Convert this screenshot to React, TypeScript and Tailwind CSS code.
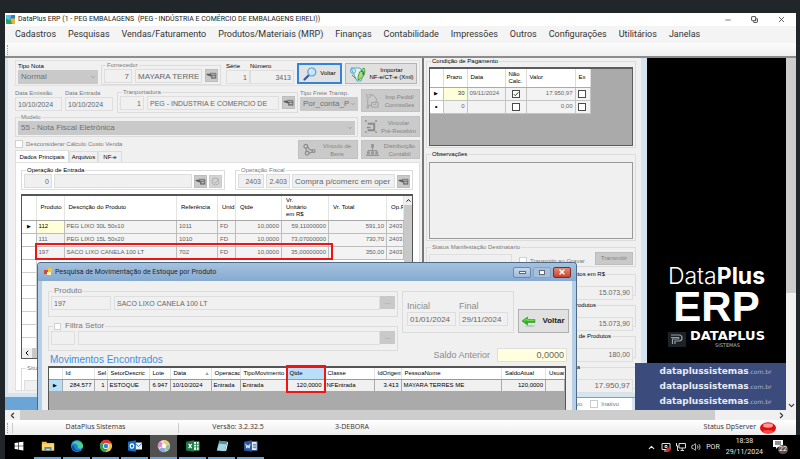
import React, { useId } from 'react';
import { ChevronDown, ChevronLeft, ChevronRight, ChevronUp, Minus, X, Copy, Volume2 } from 'lucide-react';

const cx = (...parts: (string | false | undefined)[]) => parts.filter(Boolean).join(' ');

/* ---------- form primitives ---------- */

function Box({ value = '', label, className }: { value?: string; label: string; className?: string }) {
  return (
    <input
      aria-label={label}
      defaultValue={value}
      readOnly
      className={cx(
        'h-[14px] min-w-0 border border-[#dedede] bg-[#f0f0f0] px-[2px] text-[7px] text-[#666] outline-none',
        className,
      )}
    />
  );
}

function Field({ label, dark, className, children }: { label: string; dark?: boolean; className?: string; children: React.ReactNode }) {
  return (
    <label className={cx('flex flex-col', className)}>
      <span className={cx('h-2 text-[6px] leading-[8px] whitespace-nowrap', dark ? 'text-black' : 'text-[#7a7a7a]')}>{label}</span>
      {children}
    </label>
  );
}

function Group({ title, dark, className, legendClass, children }: { title: React.ReactNode; dark?: boolean; className?: string; legendClass?: string; children?: React.ReactNode }) {
  return (
    <fieldset className={cx('min-w-0 border border-[#dcdcdc] px-[2px] pb-px', className)}>
      <legend className={cx('ml-[2px] px-px leading-[8px] whitespace-nowrap', dark ? 'text-black' : 'text-[#7a7a7a]', legendClass ?? 'text-[6px]')}>{title}</legend>
      {children}
    </fieldset>
  );
}

function Drop({ value, label, className }: { value: string; label: string; className?: string }) {
  return (
    <span className={cx('relative flex h-[14px]', className)}>
      <select aria-label={label} className="h-full w-full min-w-0 appearance-none bg-[#c9c9c9] pl-[3px] text-[8px] text-[#707070] outline-none">
        <option>{value}</option>
      </select>
      <ChevronDown className="pointer-events-none absolute top-[4px] right-[2px] size-[6px] text-[#808080]" />
    </span>
  );
}

function Tick({ label, checked }: { label: string; checked?: boolean }) {
  return (
    <span className="relative inline-flex size-2 align-middle">
      <input
        type="checkbox"
        aria-label={label}
        defaultChecked={checked}
        className="size-2 appearance-none border border-[#4a4a4a] bg-white"
      />
      {checked && (
        <svg viewBox="0 0 8 8" className="pointer-events-none absolute inset-0 size-2" fill="none" stroke="#333">
          <path d="M1.8 4.2 3.3 5.7 6.4 2.3" />
        </svg>
      )}
    </span>
  );
}

function FindButton() {
  return (
    <button aria-label="Localizar" className="flex h-[13px] w-[13px] shrink-0 items-center justify-center border border-[#bdbdbd] bg-[#c9c9c9]">
      <svg viewBox="0 0 12 8" className="h-[7px] w-[11px]" fill="none" stroke="#6a6a6a">
        <path d="M.5 2h4l1.500 1.500L5 5 .5 3.500z" fill="#5c5c5c" stroke="none" />
        <path d="M4 1.500h7v2" />
        <rect x="6" y="3.500" width="5" height="3.500" fill="#8a8a8a" />
        <path d="M7.500 5.200h2" stroke="#ddd" />
      </svg>
    </button>
  );
}

function ActionButton({ lines, icon, className }: { lines: string[]; icon: React.ReactNode; className?: string }) {
  return (
    <button className={cx('flex items-center justify-center gap-px border border-[#c2c2c2] bg-[#cacaca] pr-[3px] text-[6px] leading-[8px] text-[#848484]', className)}>
      <span className="flex w-5 justify-center">{icon}</span>
      <span className="flex-1 whitespace-nowrap">
        {lines.map((l) => (
          <span key={l} className="block">{l}</span>
        ))}
      </span>
    </button>
  );
}

/* ---------- drawings ---------- */

const PedidoIcon = () => (
  <svg viewBox="0 0 18 18" className="size-[17px]" fill="none" stroke="#a0a0a0">
    <path d="M3 8 9 2.500 14 8M4 8v6h4M13 8v3M8 11h7v5H8zM3 2v4M5 3h3M10 13h3" />
    <circle cx="4" cy="16" r="1.200" />
  </svg>
);
const VincularIcon = () => (
  <svg viewBox="0 0 14 14" className="size-[13px]" fill="none" stroke="#8b8b8b" strokeWidth="2">
    <path d="M4 4h7v7H4" />
    <path d="M1 1h2M1 13h2M12 1h2M12 13h2M3 8h4" strokeWidth="1.500" />
  </svg>
);
const VinculoIcon = () => (
  <svg viewBox="0 0 14 14" className="size-[13px]" fill="none" stroke="#8b8b8b" strokeWidth="1.300">
    <circle cx="3" cy="3.500" r="2" />
    <circle cx="4.500" cy="11" r="2" />
    <circle cx="11.500" cy="8.500" r="1.500" />
    <path d="M3 5.500l1 3.500M6.500 11l4-1.500M5 4l2 3 3 1" />
  </svg>
);
const DistribuicaoIcon = () => (
  <svg viewBox="0 0 14 14" className="size-[13px]" fill="#959595">
    <path d="M5.500 1h3v4h-3zM6.500 5h1v3h-1zM2 7.500h10v1H2zM1 9h3v3H1zM5.500 9h3v3h-3zM10 9h3v3h-3z" />
    <path d="M0 12.500h14V14H0z" />
  </svg>
);
const MagnifierIcon = () => (
  <svg viewBox="0 0 14 14" className="size-[14px]">
    <path d="M1.500 12.500 6 8" stroke="#345a9a" strokeWidth="2.200" strokeLinecap="round" />
    <circle cx="8.800" cy="5" r="4" fill="#bfe6fb" stroke="#5b9fd6" strokeWidth="1.200" />
    <path d="M6.500 4.500a2.500 2.500 0 0 1 2-2" stroke="#fff" fill="none" />
  </svg>
);
const ImportIcon = () => (
  <svg viewBox="0 0 18 18" className="size-[18px]" fill="none">
    <path d="M2 3h9l4 5-3 8H8z" fill="#dff3f7" stroke="#58a9b8" />
    <path d="M9 15c0-5 1-9 6-12 2 4 0 9-4 11z" fill="#a6e25c" stroke="#4d9a3a" />
    <path d="M12 6c2 0 3 2 2 4" stroke="#1b74c9" strokeWidth="1.500" />
    <circle cx="4" cy="6" r="2.500" stroke="#52b3d9" />
    <path d="M3 10l4 4" stroke="#5a8a9a" />
  </svg>
);
const GreenArrow = () => (
  <svg viewBox="0 0 14 11" className="h-[11px] w-[14px]">
    <ellipse cx="8" cy="10" rx="5" ry="1" fill="#b9c9b9" />
    <path d="M0 5 5.500 1v2.500H13v3H5.500V9z" fill="#2db51d" stroke="#1c8a12" strokeWidth=".5" />
    <path d="M2 5 5 3v1.300h7.500" stroke="#8bea70" strokeWidth=".8" fill="none" />
  </svg>
);

/* ---------- title and menu ---------- */

const menus = ['Cadastros', 'Pesquisas', 'Vendas/Faturamento', 'Produtos/Materiais (MRP)', 'Finanças', 'Contabilidade', 'Impressões', 'Outros', 'Configurações', 'Utilitários', 'Janelas'];

function TopBars() {
  return (
    <header className="font-['Roboto','Noto_Sans',sans-serif]">
      <div className="flex h-[13px] items-center bg-white pr-[10px] pl-px">
        <svg viewBox="0 0 10 10" className="size-[9px]">
          <rect width="10" height="10" fill="#2b7fc4" />
          <path d="M0 0h6L4 6 0 4z" fill="#4cc3e8" />
          <path d="M5 4h5v6H4z" fill="#f0b33a" />
          <path d="M0 6l5-1 2 5H0z" fill="#2fa35b" />
        </svg>
        <h1 className="ml-[3px] text-[7px] leading-[13px] whitespace-pre text-[#222]">{'DataPlus ERP (1 - PEG EMBALAGENS  (PEG - INDÚSTRIA E COMÉRCIO DE EMBALAGENS EIRELI))'}</h1>
        <div className="ml-auto flex items-center gap-[19px] text-[#333]">
          <button aria-label="Minimizar"><Minus className="size-[8px]" /></button>
          <button aria-label="Restaurar"><Copy className="size-[7px] -scale-x-100 rotate-90" strokeWidth={3} /></button>
          <button aria-label="Fechar"><X className="size-[9px]" /></button>
        </div>
      </div>
      <nav className="flex h-[17px] items-center gap-[12px] bg-[#f4f4f4] pl-[10px] text-[9px] text-[#333]">
        {menus.map((m) => (
          <button key={m} className="whitespace-nowrap">{m}</button>
        ))}
      </nav>
      <div className="flex h-[15px] items-center border-b-2 border-[#8c8c8c] bg-linear-to-b from-[#fcfcfc] to-[#f0f0f0] pl-[2px]">
        <span className="h-[10px] border-l border-dotted border-[#999]" />
      </div>
    </header>
  );
}

/* ---------- products grid ---------- */

const products = [
  ['112', 'PEG LIXO 30L 50x10', '1011', 'FD', '10,0000', '59,11000000', '591,10', '2403'],
  ['111', 'PEG LIXO 15L 50x20', '1010', 'FD', '10,0000', '73,07000000', '730,70', '2403'],
  ['197', 'SACO LIXO CANELA 100 LT', '702', 'FD', '10,0000', '35,00000000', '350,00', '2403'],
];
const blankRows = [0, 1, 2, 3, 4, 5, 6];

function ProductsGrid() {
  const head = ['Produto', 'Descrição do Produto', 'Referência', 'Unid', 'Qtde'];
  return (
    <div className="relative mt-[4px] mr-[6px] flex h-[165px] flex-col border border-t-2 border-[#555] bg-white">
      <div className="flex min-h-0 flex-1">
        <div className="min-w-0 flex-1 overflow-hidden">
          <table className="w-full table-fixed border-collapse text-[6px] leading-[7px] whitespace-nowrap">
            <colgroup>
              <col className="w-[14px]" />
              <col className="w-[28px]" />
              <col />
              <col className="w-[41px]" />
              <col className="w-[18px]" />
              <col className="w-[46px]" />
              <col className="w-[47px]" />
              <col className="w-[58px]" />
              <col className="w-[17px]" />
            </colgroup>
            <thead>
              <tr className="h-[24px] text-left text-black [&>th]:overflow-hidden [&>th]:border-r [&>th]:border-b [&>th]:border-r-[#e4e4e4] [&>th]:border-b-[#a8a8a8] [&>th]:px-[4px] [&>th]:font-normal">
                <th />
                {head.map((h) => (
                  <th key={h}>{h}</th>
                ))}
                <th>Vr.<br />Unitário<br />em R$</th>
                <th>Vr. Total</th>
                <th>Op.F</th>
              </tr>
            </thead>
            <tbody className="text-[#606060]">
              {products.map((p, r) => (
                <tr key={p[0]} className="h-[13px] bg-[#f3f3f3] [&>td]:border-r [&>td]:border-b [&>td]:border-[#bdbdbd] [&>td]:px-[2px]">
                  <td className="bg-white text-center text-[5px] text-black">{r === 0 ? '▶' : ''}</td>
                  {p.map((v, i) => (
                    <td key={i} className={cx('overflow-hidden', i >= 4 && i < 7 && 'text-right', i === 0 && r === 0 && 'bg-[#ffffd8] text-black')}>{v}</td>
                  ))}
                </tr>
              ))}
              {blankRows.map((b) => (
                <tr key={b} className="h-[13px]">
                  <td className="border-r border-b border-[#cfcfcf]" />
                  <td className="border-b border-[#cfcfcf]" colSpan={8} />
                </tr>
              ))}
            </tbody>
          </table>
        </div>
        <div className="flex w-[8px] flex-col items-center bg-[#f0f0f0]">
          <ChevronUp className="my-px size-[7px] text-black" strokeWidth={3} />
          <div className="w-full flex-1 bg-[#c8c8c8]" />
        </div>
      </div>
      <div className="flex h-[10px] items-center bg-[#f0f0f0]">
        <ChevronLeft className="mx-px size-[8px] text-black" strokeWidth={3} />
        <div className="h-full flex-1 bg-[#c8c8c8]" />
      </div>
      <div className="absolute top-[47px] right-[79px] left-[13px] h-[17px] border-2 border-[#f01414]" />
    </div>
  );
}

/* ---------- invoice form, left side ---------- */

function InvoiceLeft() {
  return (
    <section className="flex min-w-0 flex-1 flex-col pt-[2px] pr-[2px] pl-[7px]">
      <div className="flex h-[26px] border border-[#e2e2e2] px-[2px]">
        <Field label="Tipo Nota" dark className="mr-[3px] w-[80px] pt-px"><Drop label="Tipo Nota" value="Normal" /></Field>
        <Group title="Fornecedor" className="mr-[5px] h-[24px] flex-1">
          <div className="flex gap-[3px]">
            <Box label="Código do fornecedor" value="7" className="w-[28px] text-right text-[8px]" />
            <Box label="Nome do fornecedor" value="MAYARA TERRE" className="flex-1 text-[8px]" />
            <FindButton />
          </div>
        </Group>
        <Field label="Série" dark className="w-[24px] pt-px"><Box label="Série" value="1" className="w-full text-right" /></Field>
        <Field label="Número" dark className="mr-[3px] w-[44px] pt-px"><Box label="Número" value="3413" className="w-full text-right" /></Field>
        <button className="mt-[2px] mr-[3px] flex h-[21px] w-[45px] items-center justify-center gap-[3px] border-2 border-[#2f86d8] bg-[#e2e2e2] text-[6px] text-black"><MagnifierIcon />Voltar</button>
        <button className="mt-[2px] flex h-[21px] w-[72px] items-center justify-center gap-[3px] border border-[#b4b4b4] bg-[#e0e0e0] text-[6px] leading-[7px] text-black"><ImportIcon /><span className="whitespace-nowrap">Importar<br />NF-e/CT-e (Xml)</span></button>
      </div>
      <div className="mt-[2px] flex h-[25px]">
        <Field label="Data Emissão" className="mr-[3px] w-[47px] pt-px"><Box label="Data Emissão" value="10/10/2024" className="w-full" /></Field>
        <Field label="Data Entrada" className="mr-[4px] w-[48px] pt-px"><Box label="Data Entrada" value="10/10/2024" className="w-full" /></Field>
        <Group title="Tranportadora" className="mr-[2px] flex-1">
          <div className="flex gap-[3px]">
            <Box label="Código da transportadora" value="1" className="w-[24px] text-right" />
            <Box label="Nome da transportadora" value="PEG - INDUSTRIA E COMERCIO DE" className="flex-1" />
            <FindButton />
          </div>
        </Group>
        <Field label="Tipo Frete Transp." className="mr-[3px] w-[58px] pt-px"><Drop label="Tipo Frete" value="Por_conta_P" /></Field>
        <ActionButton lines={['Imp.Pedid/', 'Comissões']} icon={<PedidoIcon />} className="mt-px h-[23px] w-[59px]" />
      </div>
      <div className="flex h-[24px]">
        <Group title="Modelo" className="mr-[3px] flex-1"><Drop label="Modelo" value="55 - Nota Fiscal Eletrônica" /></Group>
        <ActionButton lines={['Vincular', 'Pré-Recebim']} icon={<VincularIcon />} className="mt-[3px] h-[21px] w-[59px]" />
      </div>
      <div className="flex h-[25px] gap-[3px] pt-[3px]">
        <div className="flex flex-1 flex-col justify-between">
          <label className="flex items-center gap-[3px] text-[6px] leading-[8px] text-[#7a7a7a]">
            <input type="checkbox" className="size-2 appearance-none border border-[#d0d0d0] bg-white" />
            Desconsiderar Cálculo Custo Venda
          </label>
          <div className="flex items-end text-[6px] leading-[10px] text-black">
            <button className="h-[12px] w-[54px] border border-b-0 border-[#ddd] bg-white">Dados Principais</button>
            <button className="h-[11px] w-[29px] border border-b-0 border-[#ddd]">Arquivos</button>
            <button className="h-[11px] w-[24px] border border-b-0 border-[#ddd]">NF-e</button>
          </div>
        </div>
        <ActionButton lines={['Vínculo de', 'Bens']} icon={<VinculoIcon />} className="h-[19px] w-[60px]" />
        <ActionButton lines={['Distribuição', 'Contábil']} icon={<DistribuicaoIcon />} className="h-[19px] w-[59px]" />
      </div>
      <div className="mb-[2px] min-h-0 flex-1 overflow-hidden border border-[#e0e0e0] bg-white pt-[3px] pl-[5px]">
        <div className="mr-[6px] flex justify-between">
          <Group title="Operação de Entrada" dark className="w-[204px]">
            <div className="flex items-center gap-[2px]">
              <Box label="Código da operação" value="0" className="w-[28px] text-right" />
              <Box label="Operação de Entrada" className="flex-1" />
              <FindButton />
              <button aria-label="Confirmar" className="flex h-[13px] w-[13px] items-center justify-center border border-[#ccc] bg-[#d4d4d4]">
                <svg viewBox="0 0 10 10" className="size-[9px]" fill="none" stroke="#aaa"><circle cx="5" cy="5" r="4" /><path d="M3 5l2 2 3-4" /></svg>
              </button>
            </div>
          </Group>
          <Group title="Operação Fiscal" className="w-[178px]">
            <div className="flex items-center gap-[2px]">
              <Box label="CFOP" value="2403" className="w-[26px] text-right" />
              <Box label="CFOP formatado" value="2.403" className="w-[24px] text-right" />
              <Box label="Operação Fiscal" value="Compra p/comerc em oper" className="flex-1 text-[8px]" />
              <FindButton />
            </div>
          </Group>
        </div>
        <ProductsGrid />
        <Group title="Situação" className="mt-[5px] mr-[6px]"><Box label="Situação" className="w-[80px]" /></Group>
      </div>
    </section>
  );
}

/* ---------- invoice form, right side ---------- */

function Total({ title, value, legend, bold }: { title: string; value: string; legend: string; bold?: boolean }) {
  return (
    <Group title={<span className={cx('block text-right', legend)}>{title}</span>} dark className="h-[26px] w-[110px] self-end">
      <Box label={title} value={value} className={cx('w-full text-right', bold && 'text-[8px]')} />
    </Group>
  );
}

function PaymentGrid() {
  return (
    <div className="h-[79px] border border-t-2 border-[#5c5c5c] bg-[#aaa]">
      <table className="w-[160px] table-fixed border-collapse text-[6px] leading-[7px]">
        <colgroup>
          <col className="w-[13px]" />
          <col className="w-[24px]" />
          <col className="w-[38px]" />
          <col className="w-[21px]" />
          <col className="w-[49px]" />
          <col className="w-[15px]" />
        </colgroup>
        <thead>
          <tr className="h-[18px] bg-white text-left text-black [&>th]:border-r [&>th]:border-b [&>th]:border-r-[#ddd] [&>th]:border-b-[#aaa] [&>th]:px-[3px] [&>th]:font-normal">
            <th /><th>Prazo</th><th>Data</th><th>Não Calc.</th><th>Valor</th><th>Ex</th>
          </tr>
        </thead>
        <tbody className="text-[#666] [&_td]:border-r [&_td]:border-b [&_td]:border-[#c4c4c4] [&_td]:px-[2px]">
          <tr className="h-[13px] bg-[#f3f3f3]">
            <td className="bg-white text-center text-[5px] text-black">▶</td>
            <td className="bg-[#ffffd8] text-right text-[#333]">30</td>
            <td>09/11/2024</td>
            <td className="text-center"><Tick label="Não calcular parcela 1" checked /></td>
            <td className="text-right">17.950,97</td>
            <td><Tick label="Excluir parcela 1" /></td>
          </tr>
          <tr className="h-[13px] bg-[#f3f3f3]">
            <td className="bg-white text-center text-[8px] text-black">•</td>
            <td className="text-right">0</td>
            <td />
            <td className="text-center"><Tick label="Não calcular parcela 2" /></td>
            <td className="text-right">0,00</td>
            <td><Tick label="Excluir parcela 2" /></td>
          </tr>
        </tbody>
      </table>
    </div>
  );
}

function InvoiceRight() {
  const id = useId();
  return (
    <section className="flex w-[219px] shrink-0 flex-col overflow-hidden border-l-2 border-[#777] pr-[5px] pl-[2px]">
      <Group title="Condição de Pagamento" dark className="-mt-px pt-[2px]"><PaymentGrid /></Group>
      <Group title="Observações" dark className="mt-[2px] pt-[4px]">
        <textarea aria-label="Observações" readOnly className="block h-[77px] w-full resize-none border border-[#999] bg-[#f0f0f0] outline-none" />
      </Group>
      <Group title="Status Manifestação Destinatario" className="mt-[2px]">
        <div className="flex h-[14px] items-center gap-[7px]">
          <Box label="Status Manifestação" className="mt-[6px] w-[83px]" />
          <label htmlFor={id} className="mt-[6px] flex flex-1 items-center gap-[3px] text-[6px] leading-[8px] whitespace-nowrap text-[#7a7a7a]">
            <input id={id} type="checkbox" className="size-2 appearance-none border border-[#d0d0d0] bg-white" />
            Transmitir ao Gravar
          </label>
          <button className="h-[13px] w-[38px] shrink-0 border border-[#bdbdbd] bg-[#c9c9c9] text-[6px] leading-[9px] text-[#848484]">Transmitir</button>
        </div>
      </Group>
      <div className="mt-[3px] flex flex-col gap-[5px]">
        <Total title="Produtos em R$" value="15.073,90" legend="w-[73px]" />
        <Total title="Total Produtos" value="15.073,90" legend="w-[64px]" />
        <Total title="Total de Produtos" value="180,00" legend="w-[79px]" />
        <Total title="Nota" value="17.950,97" legend="w-[48px]" bold />
      </div>
    </section>
  );
}

/* ---------- stock movement window ---------- */

const movementCols: { head: string; value: string; width: string; right?: boolean }[] = [
  { head: 'Id', value: '284.577', width: 'w-[32px]', right: true },
  { head: 'Sel', value: '1', width: 'w-[13px]', right: true },
  { head: 'SetorDescric', value: 'ESTOQUE', width: 'w-[42px]' },
  { head: 'Lote', value: '6.947', width: 'w-[21px]', right: true },
  { head: 'Data', value: '10/10/2024', width: 'w-[41px]' },
  { head: 'Operacao', value: 'Entrada', width: 'w-[29px]' },
  { head: 'TipoMovimento', value: 'Entrada', width: 'w-[46px]' },
  { head: 'Qtde', value: '120,0000', width: 'w-[38px]', right: true },
  { head: 'Classe', value: 'NFEntrada', width: 'w-[50px]' },
  { head: 'IdOrigem', value: '3.413', width: 'w-[27px]', right: true },
  { head: 'PessoaNome', value: 'MAYARA TERRES ME', width: '' },
  { head: 'SaldoAtual', value: '120,0000', width: 'w-[44px]', right: true },
  { head: 'Usuario', value: '', width: 'w-[19px]' },
];

function MovementGrid() {
  return (
    <div className="relative mr-[6px] min-h-0 flex-1 border border-t-2 border-b-0 border-[#555] bg-[#aaa]">
      <table className="w-full table-fixed border-collapse text-[6px] leading-[8px] whitespace-nowrap">
        <colgroup>
          <col className="w-[13px]" />
          {movementCols.map((c) => <col key={c.head} className={c.width} />)}
        </colgroup>
        <thead>
          <tr className="h-[11px] bg-white text-left text-black [&>th]:overflow-hidden [&>th]:border-r [&>th]:border-b [&>th]:border-r-[#e4e4e4] [&>th]:border-b-[#999] [&>th]:pl-[3px] [&>th]:font-normal">
            <th />
            {movementCols.map((c) => (
              <th key={c.head} className={cx(c.head === 'Qtde' && 'bg-[#b9def7]')}>
                {c.head}
                {c.head === 'Data' && <span className="float-right mr-px text-[5px] text-[#999]">▲</span>}
              </th>
            ))}
          </tr>
        </thead>
        <tbody>
          <tr className="h-[12px] bg-[#f0f0f0] text-black [&>td]:overflow-hidden [&>td]:border-r [&>td]:border-b [&>td]:border-[#aaa] [&>td]:px-[2px]">
            <td className="bg-[#b9def7] text-center text-[5px]">▶</td>
            {movementCols.map((c) => (
              <td key={c.head} className={cx(c.right && 'text-right')}>{c.value}</td>
            ))}
          </tr>
        </tbody>
      </table>
      <div className="absolute -top-[3px] right-[239px] h-[28px] w-[40px] border-2 border-[#f01414]" />
    </div>
  );
}

function CaptionButton({ label, className, children }: { label: string; className: string; children: React.ReactNode }) {
  return (
    <button aria-label={label} className={cx('flex h-[11px] w-[18px] items-center justify-center rounded-[2px] border', className)}>{children}</button>
  );
}

function StockWindow() {
  return (
    <div className="absolute top-[204px] right-[209px] bottom-0 left-[32px] flex flex-col rounded-t-[4px] border border-b-0 border-[#4f6a86] bg-[#b4cfe8] px-[4px]">
      <div className="-mx-[4px] flex h-[18px] shrink-0 items-center rounded-t-[3px] bg-linear-to-b from-[#a5c2de] to-[#86aad0] pr-[5px] pl-[6px]">
        <svg viewBox="0 0 8 8" className="size-2"><path d="M0 2h4v4H0z" fill="#d9482b" /><path d="M4 0h4v4H4z" fill="#f3c63a" /><path d="M3 4h4v3H3z" fill="#fff1b0" /></svg>
        <h2 className="ml-[3px] flex-1 font-['Roboto','Noto_Sans',sans-serif] text-[7px] text-[#1c2733]">Pesquisa de Movimentação de Estoque por Produto</h2>
        <div className="flex gap-[2px]">
          <CaptionButton label="Minimizar" className="border-[#6d88a6] bg-linear-to-b from-[#c4d8ec] to-[#9dbbdb]"><span className="h-[3px] w-[7px] border border-[#666] bg-white" /></CaptionButton>
          <CaptionButton label="Maximizar" className="border-[#8aa4c0] bg-[#a4c0de]"><span className="h-[5px] w-[6px] border border-[#667] bg-white" /></CaptionButton>
          <CaptionButton label="Fechar" className="border-[#7a2f22] bg-linear-to-b from-[#e08a78] to-[#c8402a]"><X className="size-[8px] text-white" strokeWidth={4} /></CaptionButton>
        </div>
      </div>
      <div className="flex min-h-0 flex-1 flex-col bg-[#f0f0f0] pt-[6px] pl-[6px]">
        <div className="flex">
          <div className="flex-1">
            <Group title="Produto" legendClass="text-[8px]" className="h-[30px] pt-px">
              <div className="flex gap-[3px]">
                <Box label="Código do produto" value="197" className="w-[60px]" />
                <div className="flex min-w-0 flex-1">
                  <Box label="Descrição do produto" value="SACO LIXO CANELA 100 LT" className="flex-1" />
                  <button aria-label="Buscar produto" className="h-[13px] w-[15px] bg-[#c9c9c9] text-[7px] text-[#999]">...</button>
                </div>
              </div>
            </Group>
            <Group
              title={<label className="flex items-center gap-[4px]"><input type="checkbox" className="size-[7px] appearance-none border border-[#d0d0d0] bg-white" />Filtra Setor</label>}
              legendClass="text-[8px]"
              className="mt-[5px] h-[29px] pt-px"
            >
              <div className="flex gap-[3px]">
                <Box label="Código do setor" className="w-[24px]" />
                <div className="flex min-w-0 flex-1">
                  <Box label="Setor" className="flex-1" />
                  <button aria-label="Buscar setor" className="h-[13px] w-[15px] bg-[#c9c9c9] text-[7px] text-[#999]">...</button>
                </div>
              </div>
            </Group>
            <h3 className="mt-[3px] mb-px ml-[2px] text-[10px] leading-[11px] text-[#3f8fe0]">Movimentos Encontrados</h3>
          </div>
          <div className="ml-[4px] flex w-[170px] flex-col">
            <div className="flex">
              <div className="mt-[4px] flex h-[42px] w-[112px] gap-[3px] border border-[#dcdcdc] px-[4px] pt-[9px]">
                <label className="flex w-[49px] flex-col text-[9px] leading-[11px] text-[#8c8c8c]">Inicial<Box label="Inicial" value="01/01/2024" className="w-full text-[8px]" /></label>
                <label className="flex w-[49px] flex-col text-[9px] leading-[11px] text-[#8c8c8c]">Final<Box label="Final" value="29/11/2024" className="w-full text-[8px]" /></label>
              </div>
              <button className="mt-[22px] ml-[4px] flex h-[24px] w-[51px] items-center justify-center gap-[6px] border border-[#b0b0b0] bg-[#e1e1e1] text-[8px] font-bold text-[#222]"><GreenArrow />Voltar</button>
            </div>
            <label className="mt-[15px] flex items-center justify-end gap-[7px] pr-[5px] text-[9px] leading-[13px] text-[#8c8c8c]">
              Saldo Anterior
              <Box label="Saldo Anterior" value="0,0000" className="w-[70px] bg-[#ffffe0] text-right text-[9px]" />
            </label>
          </div>
        </div>
        <MovementGrid />
      </div>
    </div>
  );
}

/* ---------- brand panel ---------- */

function Brand() {
  return (
    <aside className="flex w-[139px] shrink-0 flex-col bg-black text-white">
      <div className="flex flex-1 flex-col items-center justify-end pb-[15px]">
        <p className="font-['Inter'] text-[23px] leading-[24px]"><span className="font-light">Data</span><span className="font-bold">Plus</span></p>
        <p className="text-[42px] leading-[38px] font-bold">ERP</p>
        <div className="mt-[4px] flex items-center gap-[4px]">
          <svg viewBox="0 0 18 15" className="h-[15px] w-[18px]">
            <rect width="18" height="15" fill="#1d2226" />
            <path d="M3 3h8a3 3 0 0 1 0 6H7v3M3 5.500h7.500a1 1 0 0 1 0 1.500H4.500v5" fill="none" stroke="#93a0aa" strokeWidth="1.200" />
          </svg>
          <div className="flex flex-col items-center font-['DejaVu_Sans']">
            <p className="text-[13px] leading-[12px] font-bold">DATAPLUS</p>
            <p className="text-[5px] leading-[6px] text-[#bbb]">SISTEMAS</p>
          </div>
        </div>
      </div>
      <div className="-ml-[12px] flex h-[47px] flex-col justify-center bg-[#3b4b7c] pl-[10px] text-center font-['DejaVu_Sans']">
        {[0, 1, 2].map((i) => (
          <p key={i} className="text-[9px] leading-[14px] font-bold text-[#e8ecf5]">dataplussistemas<span className="text-[6px] font-normal text-[#aab4d0]">.com.br</span></p>
        ))}
      </div>
    </aside>
  );
}

/* ---------- status bar and taskbar ---------- */

function StatusBar() {
  return (
    <footer className="flex h-[15px] items-center bg-linear-to-b from-white to-[#ececec] font-['Open_Sans','Noto_Sans',sans-serif] text-[7px] text-[#333]">
      <span className="ml-[2px] h-[10px] border-l border-dotted border-[#999]" />
      <span className="ml-[4px] h-[10px] border-l border-[#ccc]" />
      <span className="w-[165px] text-center">DataPlus Sistemas</span>
      <span className="h-[10px] border-l border-[#ccc]" />
      <span className="w-[118px] text-center">Versão: 3.2.32.5</span>
      <span className="w-[110px] text-center">3-DEBORA</span>
      <span className="mr-[4px] ml-auto">Status DpServer</span>
      <svg viewBox="0 0 16 12" className="mr-[20px] h-[12px] w-[16px]">
        <ellipse cx="8" cy="6" rx="8" ry="5.800" fill="#e00f14" />
        <ellipse cx="8" cy="3.500" rx="5" ry="2.200" fill="#ff9a94" />
        <ellipse cx="8" cy="9.500" rx="5" ry="1.500" fill="#ff4a46" />
      </svg>
    </footer>
  );
}

const taskIcons: { name: string; active?: boolean; open?: boolean; art: React.ReactNode }[] = [
  { name: 'Iniciar', art: <path d="M3 4.500l4-.6v3.700H3zM7.700 3.800 13 3v4.600H7.700zM3 8.400h4v3.700l-4-.6zM7.700 8.400H13V13l-5.300-.8z" fill="#fff" /> },
  { name: 'Explorador', open: true, art: <><path d="M1 3h5l1 1.500h8V13H1z" fill="#f5c246" /><path d="M1 6h14v7H1z" fill="#fbd872" /><path d="M4 9h8v4h-2v-2H6v2H4z" fill="#3a8edb" /></> },
  { name: 'Edge', open: true, art: <><circle cx="8" cy="8" r="7" fill="#1b84d8" /><path d="M2 6a7 7 0 0 1 13 2c0 3-4 4-6 2 1-4-4-6-7-4z" fill="#4fd08b" /><path d="M5 8c-1 4 3 6 7 5a7 7 0 0 1-10-3c0-2 1-3 3-2z" fill="#0d4f9e" /></> },
  { name: 'Chrome', open: true, art: <><circle cx="8" cy="8" r="7" fill="#f7c52b" /><path d="M8 8 2 4.400A7 7 0 0 1 14.500 5H8z" fill="#e23e30" /><path d="M8 8 1.900 4.500A7 7 0 0 0 7.500 15L11 9.500z" fill="#2fa24c" /><circle cx="8" cy="8" r="3.400" fill="#fff" /><circle cx="8" cy="8" r="2.600" fill="#3c7de6" /></> },
  { name: 'Outlook', open: true, art: <><path d="M8 4h8v8H8z" fill="#e9f2fb" /><path d="M8 5l4 3.500L16 5" fill="none" stroke="#1a73c7" /><path d="M0 3l9-1.500v13L0 13z" fill="#1470c4" /><ellipse cx="4.500" cy="8" rx="2" ry="2.500" fill="none" stroke="#fff" strokeWidth="1.300" /></> },
  { name: 'DataPlus', open: true, active: true, art: <><circle cx="8" cy="8" r="7" fill="#e8dfe2" /><path d="M8 8V1a7 7 0 0 1 6 4z" fill="#f2c66a" /><path d="M8 8l6.500-2A7 7 0 0 1 11 14z" fill="#8fc79a" /><path d="M8 8l2 6.500A7 7 0 0 1 2 12z" fill="#8aa9e0" /><path d="M8 8 1 10a7 7 0 0 1 3-7.500z" fill="#e08ac0" /><circle cx="8" cy="8" r="2.500" fill="#fff" /></> },
  { name: 'Excel', open: true, art: <><path d="M8 3h7v10H8z" fill="#fff" stroke="#1e7a45" /><path d="M9 6h6M9 9h6M12 3v10" stroke="#1e7a45" /><path d="M0 3l9-1.500v13L0 13z" fill="#1e7a45" /><path d="M3 5.500l3.500 5M6.500 5.500 3 10.500" stroke="#fff" strokeWidth="1.300" /></> },
  { name: 'Bloco de notas', open: true, art: <><path d="M5 2l9 1-3 11-9-1z" fill="#9fd8e3" /><path d="M5 2l9 1-1 3-9-1z" fill="#4f8f9c" /><path d="M11 14l3-11 1 1-2 9z" fill="#dff4f8" /></> },
  { name: 'Word', open: true, art: <><path d="M8 3h7v10H8z" fill="#fff" stroke="#2a569f" /><path d="M10 6h4M10 8h4M10 10h4" stroke="#2a569f" /><path d="M0 3l9-1.500v13L0 13z" fill="#2a569f" /><path d="M2 5.500l1.200 5L4.500 7l1.300 3.500 1.200-5" stroke="#fff" fill="none" /></> },
];

function Taskbar() {
  return (
    <div className="flex h-6 items-stretch bg-black text-white">
      <div className="flex gap-[2px]">
        {taskIcons.map((t) => (
          <button key={t.name} aria-label={t.name} className={cx('flex w-[27px] items-center justify-center border-b-2', t.open ? 'border-[#6ba6dd]' : 'border-transparent', t.active && 'bg-[#505050]')}>
            <svg viewBox="0 0 16 16" className="size-[14px]">{t.art}</svg>
          </button>
        ))}
      </div>
      <div className="mr-[12px] ml-auto flex items-center gap-[5px] font-['Roboto','Noto_Sans',sans-serif] text-[7px] leading-[11px] text-[#e6e6e6]">
        <ChevronUp className="size-[9px]" strokeWidth={3} />
        <svg viewBox="0 0 10 10" className="size-[10px]" fill="none" stroke="#ddd">
          <path d="M1 1.500h8v6H1zM3 9h4M4 3.500h2v2H4z" />
          <circle cx="7.500" cy="7.500" r="2.200" fill="#e02020" stroke="none" />
        </svg>
        <svg viewBox="0 0 10 10" className="size-[10px]" fill="none" stroke="#ddd">
          <path d="M3 1.500h6.500v4.500H3zM4.500 8.500h3.500M6.200 6v2.500M.5 1v3h2M1.500 4v4.500H3" />
        </svg>
        <Volume2 className="size-[10px]" />
        <span>POR</span>
        <span className="ml-px text-center">18:38<br />29/11/2024</span>
        <span className="relative ml-[5px] flex h-[14px] w-[15px]">
          <svg viewBox="0 0 10 10" className="size-[10px]" fill="#fff"><path d="M0 0h10v7H5l-2 2V7H0z" /><path d="M2 2h6M2 4h6" stroke="#222" /></svg>
          <span className="absolute right-0 bottom-0 flex h-[9px] w-[10px] items-center justify-center rounded-full bg-[#555] text-[7px] text-white">22</span>
        </span>
      </div>
    </div>
  );
}

/* ---------- page ---------- */

export default function App() {
  return (
    <div className="flex h-screen min-h-[400px] w-full flex-col bg-[#20262a] pt-[13px] pl-[5px] font-['Liberation_Sans',Arial,sans-serif]">
      <div className="mr-[4px] flex min-h-0 flex-1 flex-col bg-[#f0f0f0]">
        <TopBars />
        <main className="flex min-h-0 flex-1">
          <div className="relative flex min-w-0 flex-1 overflow-hidden">
            <div className="flex min-w-0 flex-1 flex-col">
              <div className="flex min-h-0 flex-1 border-r-[6px] border-b-[4px] border-l-[3px] border-[#d3e4f3] bg-[#f0f0f0] shadow-[0_1px_0_#888,1px_0_0_#888]">
                <InvoiceLeft />
                <InvoiceRight />
              </div>
              <div className="flex h-[13px] shrink-0 bg-[#6aa5d6] pt-px">
                <div className="ml-auto flex w-[100px] items-center justify-end gap-[8px] border-r-[3px] border-[#d3e4f3] bg-white pr-[13px] text-[6px] text-[#777]">
                  <span>Ativo</span>
                  <label className="flex items-center gap-[3px]">
                    <input type="checkbox" className="size-2 appearance-none border border-[#ccc] bg-white" />
                    Inativo
                  </label>
                </div>
                <span className="w-[12px] bg-[#3b4b7c]" />
              </div>
            </div>
            <Brand />
            <StockWindow />
          </div>
          <div className="flex w-[10px] shrink-0 flex-col items-center justify-between bg-[#f0f0f0]">
            <div className="h-2/3 w-full bg-[#cdcdcd]" />
            <ChevronDown className="size-[9px] text-[#333]" strokeWidth={3} />
          </div>
        </main>
        <div className="flex h-[10px] shrink-0 items-center bg-[#f0f0f0] pr-[10px]">
          <ChevronLeft className="mx-[3px] size-[9px] text-[#333]" strokeWidth={3} />
          <div className="h-full flex-1 bg-[#cdcdcd]" />
          <ChevronRight className="ml-[62px] size-[9px] text-[#333]" strokeWidth={3} />
        </div>
        <StatusBar />
      </div>
      <Taskbar />
    </div>
  );
}
